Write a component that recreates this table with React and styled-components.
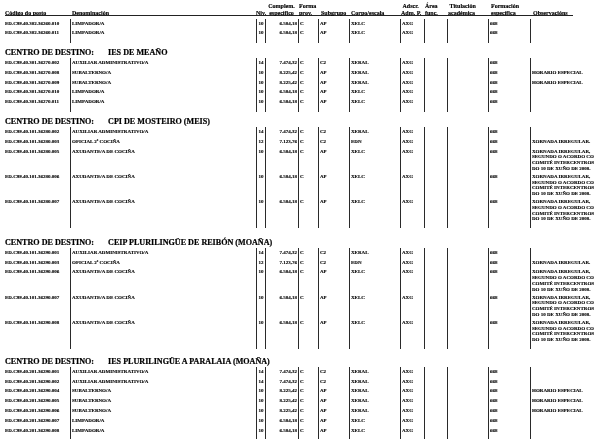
import React from "react"
import styled, { createGlobalStyle } from "styled-components"

const GlobalStyle = createGlobalStyle`
  html, body {
    margin: 0;
    padding: 0;
    background: #ffffff;
  }
  body {
    font-family: "Liberation Serif", "Times New Roman", serif;
    color: #000;
  }
`

const COLS = "65px 186px 9px 33px 20px 31px 51px 24px 23px 41px 42px 90px"

const Page = styled.div`
  padding-left: 5px;
  padding-top: 0.5px;
  width: 610px;
  overflow: hidden;
  background: #ffffff;
  filter: grayscale(1);
`

const Header = styled.div`
  display: grid;
  grid-template-columns: ${COLS};
  align-items: end;
  width: 568px;
  height: 15.5px;
  box-sizing: border-box;
  padding-top: 2.5px;
  border-bottom: 1px solid #222;
  margin-bottom: 2.5px;
`

const HeadCell = styled.div`
  font-size: 6px;
  font-weight: bold;
  line-height: 6.5px;
  white-space: nowrap;
  -webkit-text-stroke: 0.15px #000;
  padding-left: ${({ $pad }) => $pad ?? 2}px;
  text-align: ${({ $align }) => $align || "left"};
  overflow: visible;
`

const Title = styled.div`
  height: 11px;
  line-height: 11px;
  margin-top: ${({ $gap }) => $gap}px;
  font-size: 8.1px;
  font-weight: bold;
  white-space: nowrap;
  -webkit-text-stroke: 0.2px #000;
  span + span {
    margin-left: 14px;
  }
`

const Row = styled.div`
  display: grid;
  grid-template-columns: ${COLS};
  min-height: ${({ $h }) => ($h != null ? $h : 9.8)}px;
  height: ${({ $h }) => ($h != null ? `${$h}px` : "auto")};
`

const Cell = styled.div`
  box-sizing: border-box;
  padding-top: 2px;
  padding-left: ${({ $pad }) => $pad ?? 1}px;
  padding-right: ${({ $right }) => ($right ? 1 : 0)}px;
  font-size: 5px;
  font-weight: bold;
  line-height: 5.8px;
  white-space: nowrap;
  -webkit-text-stroke: 0.12px #000;
  text-align: ${({ $align }) => $align || "left"};
  border-left: ${({ $first }) => ($first ? "none" : "1px solid #2a2a2a")};
`

const ObsLine = styled.div`
  white-space: nowrap;
`

const LONG = [
  "XORNADA IRREGULAR,",
  "SEGUNDO O ACORDO CO",
  "COMITÉ INTERCENTROS",
  "DO 10 DE XUÑO DE 2008.",
]

const aux = (code) => [code, "AUXILIAR ADMINISTRATIVO/A", "14", "7.474,32", "C", "C2", "XERAL", "AXG", "668", []]
const sub = (code) => [code, "SUBALTERNO/A", "10", "8.225,42", "C", "AP", "XERAL", "AXG", "668", ["HORARIO ESPECIAL"]]
const limp = (code) => [code, "LIMPADOR/A", "10", "6.584,18", "C", "AP", "XELC", "AXG", "668", []]
const ofi = (code) => [code, "OFICIAL 2ª COCIÑA", "12", "7.123,76", "C", "C2", "EDN", "AXG", "668", ["XORNADA IRREGULAR."]]
const axu = (code) => [code, "AXUDANTE/A DE COCIÑA", "10", "6.584,18", "C", "AP", "XELC", "AXG", "668", LONG]

const sections = [
  {
    title: null,
    tail: 5,
    rows: [limp("ED.C99.40.302.36260.010"), limp("ED.C99.40.302.36260.011")],
  },
  {
    title: "IES DE MEAÑO",
    gap: 4,
    tail: 5,
    rows: [
      aux("ED.C99.40.301.36270.002"),
      sub("ED.C99.40.301.36270.008"),
      sub("ED.C99.40.301.36270.009"),
      limp("ED.C99.40.301.36270.010"),
      limp("ED.C99.40.301.36270.011"),
    ],
  },
  {
    title: "CPI DE MOSTEIRO (MEIS)",
    gap: 4,
    tail: 6,
    rows: [
      aux("ED.C99.40.101.36280.002"),
      ofi("ED.C99.40.101.36280.003"),
      axu("ED.C99.40.101.36280.005"),
      axu("ED.C99.40.101.36280.006"),
      axu("ED.C99.40.101.36280.007"),
    ],
  },
  {
    title: "CEIP PLURILINGÜE DE REIBÓN (MOAÑA)",
    gap: 8.5,
    tail: 6,
    rows: [
      aux("ED.C99.40.101.36290.001"),
      ofi("ED.C99.40.101.36290.003"),
      axu("ED.C99.40.101.36290.006"),
      axu("ED.C99.40.101.36290.007"),
      axu("ED.C99.40.101.36290.008"),
    ],
  },
  {
    title: "IES PLURILINGÜE A PARALAIA (MOAÑA)",
    gap: 7,
    tail: 6,
    rows: [
      aux("ED.C99.40.201.36290.001"),
      aux("ED.C99.40.201.36290.002"),
      sub("ED.C99.40.201.36290.004"),
      sub("ED.C99.40.201.36290.005"),
      sub("ED.C99.40.201.36290.006"),
      limp("ED.C99.40.201.36290.007"),
      limp("ED.C99.40.201.36290.008"),
    ],
  },
]

const DataRow = ({ row }) => {
  const [code, name, niv, comp, forma, sg, corpo, adscr, form, obs] = row
  return (
    <Row>
      <Cell $first $pad={0}>{code}</Cell>
      <Cell $pad={1}>{name}</Cell>
      <Cell $pad={0} $align="center">{niv}</Cell>
      <Cell $align="right" $right>{comp}</Cell>
      <Cell>{forma}</Cell>
      <Cell>{sg}</Cell>
      <Cell>{corpo}</Cell>
      <Cell>{adscr}</Cell>
      <Cell />
      <Cell />
      <Cell>{form}</Cell>
      <Cell>
        {obs.map((l) => (
          <ObsLine key={l}>{l}</ObsLine>
        ))}
      </Cell>
    </Row>
  )
}

const TailRow = ({ h }) => (
  <Row $h={h}>
    <Cell $first />
    {Array.from({ length: 11 }).map((_, i) => (
      <Cell key={i} />
    ))}
  </Row>
)

const App = () => {
  return (
    <>
      <GlobalStyle />
      <Page>
        <Header>
          <HeadCell $pad={0}>Código do posto</HeadCell>
          <HeadCell>Denominación</HeadCell>
          <HeadCell $pad={0}>Niv.</HeadCell>
          <HeadCell $pad={0} $align="center">
            Complem.
            <br />
            específico
          </HeadCell>
          <HeadCell $pad={1}>
            Forma
            <br />
            prov.
          </HeadCell>
          <HeadCell $pad={3}>Subgrupo</HeadCell>
          <HeadCell $pad={2}>Corpo/escala</HeadCell>
          <HeadCell $pad={1}>
            &nbsp;Adscr.
            <br />
            Adm. P.
          </HeadCell>
          <HeadCell $pad={1}>
            Área
            <br />
            func.
          </HeadCell>
          <HeadCell $pad={1}>
            &nbsp;Titulación
            <br />
            académica
          </HeadCell>
          <HeadCell $pad={3}>
            Formación
            <br />
            específica
          </HeadCell>
          <HeadCell $pad={3}>Observacións</HeadCell>
        </Header>

        {sections.map((s, i) => (
          <div key={i}>
            {s.title && (
              <Title $gap={s.gap}>
                <span>CENTRO DE DESTINO:</span>
                <span>{s.title}</span>
              </Title>
            )}
            {s.rows.map((r) => (
              <DataRow key={r[0]} row={r} />
            ))}
            <TailRow h={s.tail} />
          </div>
        ))}
      </Page>
    </>
  )
}

export default App
